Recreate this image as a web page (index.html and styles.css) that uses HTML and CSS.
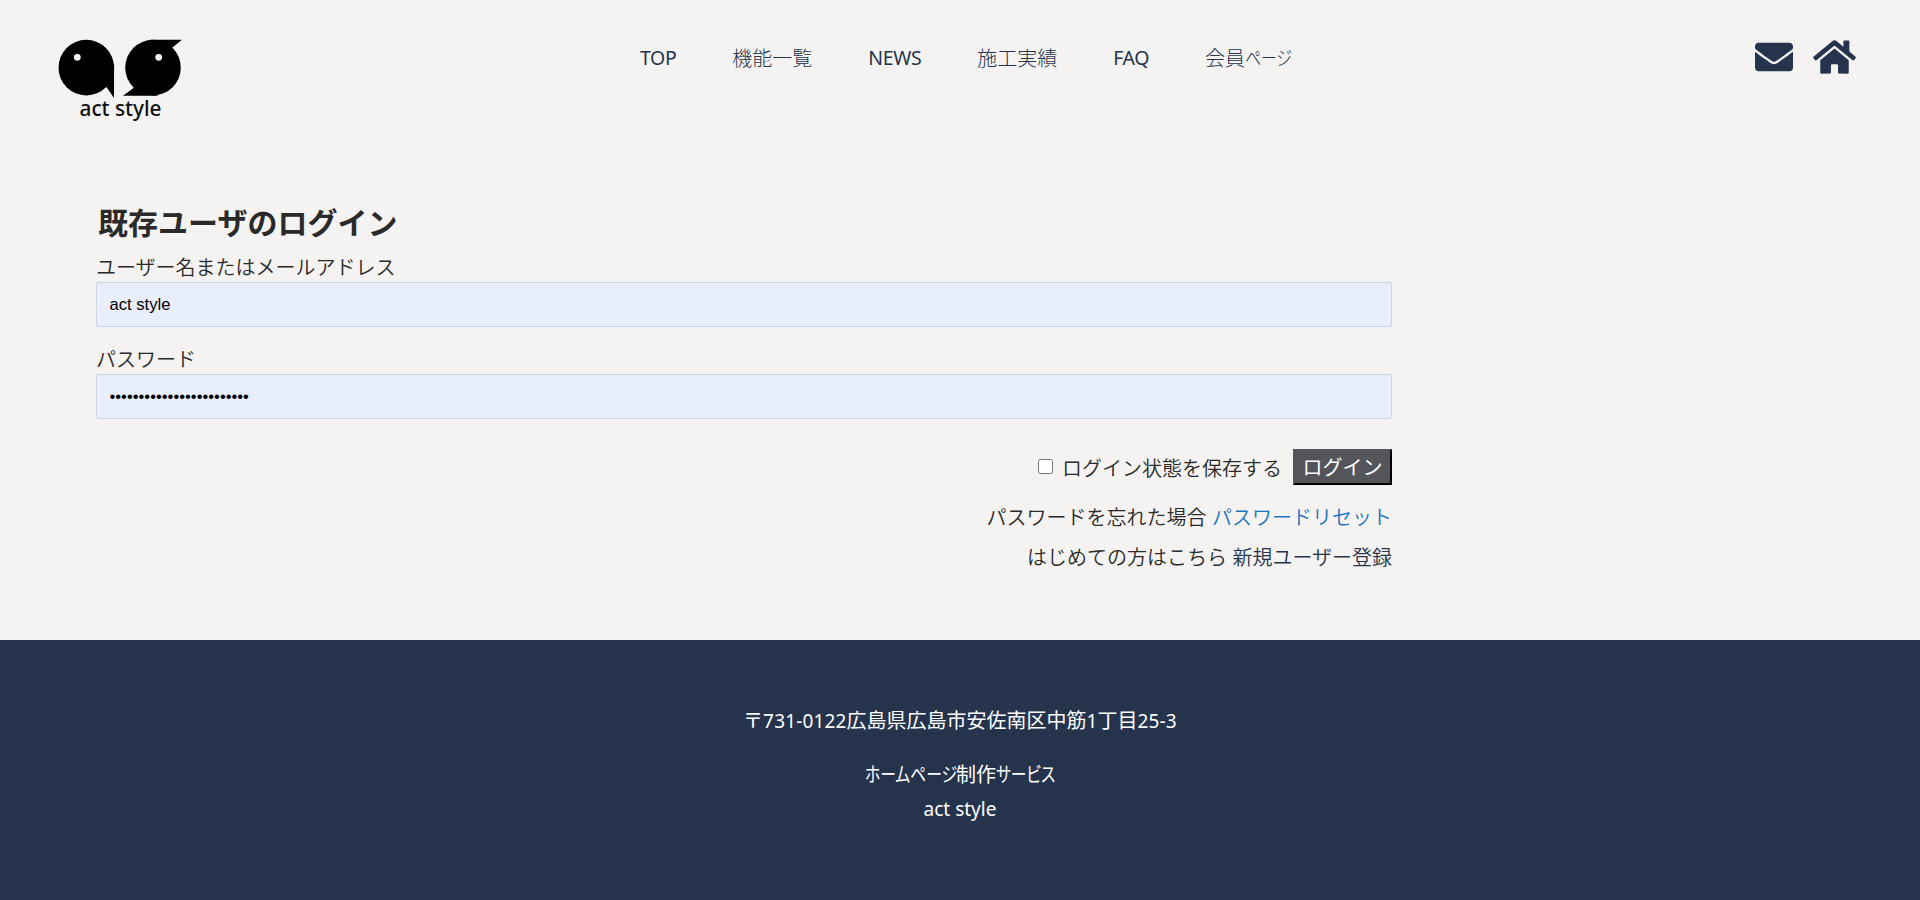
FILE: index.html
```
<!DOCTYPE html>
<html lang="ja">
<head>
    <meta charset="UTF-8">
    <meta name="viewport" content="width=device-width, initial-scale=1.0">
    <title>ログイン | act style</title>
    <link rel="stylesheet" href="styles.css">
</head>
<body>
    <header class="header">
        <a href="#" class="logo">
            <svg width="128" height="100" viewBox="0 0 128 100">
                <circle cx="30.3" cy="37.6" r="27.8"/>
                <path d="M58.1 34 L58 68 L50.8 57.5 L44 50 Z"/>
                <circle cx="97" cy="37.6" r="27.8"/>
                <path d="M94 9.8 H126 L115.8 18 L108 26 Z"/>
                <path d="M102 65.8 H67 L77.5 58 L86 50 Z"/>
                <circle class="logo-eye" cx="21.3" cy="27.3" r="3.4"/>
                <circle class="logo-eye" cx="102.7" cy="27.3" r="3.4"/>
                <text x="23.5" y="86" textLength="82" lengthAdjust="spacingAndGlyphs">act style</text>
            </svg>
        </a>
        <nav class="nav">
            <a href="#" class="en">TOP</a>
            <a href="#">機能一覧</a>
            <a href="#" class="en">NEWS</a>
            <a href="#">施工実績</a>
            <a href="#" class="en">FAQ</a>
            <a href="#">会員<span class="kana kana-page">ページ</span></a>
        </nav>
        <div class="icons">
            <a href="#">
                <svg width="38" height="38" viewBox="0 0 512 512"><path d="M502.3 190.8c3.9-3.1 9.7-.2 9.7 4.7V400c0 26.5-21.5 48-48 48H48c-26.5 0-48-21.5-48-48V195.6c0-5 5.7-7.8 9.7-4.7 22.4 17.4 52.1 39.5 154.1 113.6 21.1 15.4 56.7 47.8 92.2 47.6 35.7.3 72-32.8 92.3-47.6 102-74.1 131.6-96.3 154-113.7zM256 320c23.2.4 56.6-29.2 73.4-41.4 132.7-96.3 142.8-104.7 173.4-128.7 5.8-4.5 9.2-11.5 9.2-18.9v-19c0-26.5-21.5-48-48-48H48c-26.5 0-48 21.5-48 48v19c0 7.4 3.4 14.3 9.2 18.9 30.6 23.9 40.7 32.4 173.4 128.7 16.8 12.2 50.2 41.8 73.4 41.4z"/></svg>
            </a>
            <a href="#">
                <svg width="43" height="38" viewBox="0 0 576 512"><path d="M280.37 148.26L96 300.11V464a16 16 0 0 0 16 16l112.06-.29a16 16 0 0 0 15.92-16V368a16 16 0 0 1 16-16h64a16 16 0 0 1 16 16v95.64a16 16 0 0 0 16 16.05L464 480a16 16 0 0 0 16-16V300L295.67 148.26a12.19 12.19 0 0 0-15.3 0zM571.6 251.47L488 182.56V44.05a12 12 0 0 0-12-12h-56a12 12 0 0 0-12 12v72.61L318.47 43a48 48 0 0 0-61 0L4.34 251.47a12 12 0 0 0-1.6 16.9l25.5 31A12 12 0 0 0 45.15 301l235.22-193.74a12.19 12.19 0 0 1 15.3 0L530.9 301a12 12 0 0 0 16.9-1.6l25.5-31a12 12 0 0 0-1.7-16.93z"/></svg>
            </a>
        </div>
    </header>

    <!-- ログインフォーム -->
    <main class="main">
        <form class="login-form">
            <h2>既存ユーザのログイン</h2>
            <label for="user">ユーザー名またはメールアドレス</label>
            <input type="text" class="field" id="user" value="act style">
            <label for="pass">パスワード</label>
            <input type="password" class="field" id="pass" value="abcdefghijklmnopqrstuvwx">
            <div class="submit-row">
                <input type="checkbox" id="remember">
                <label for="remember">ログイン状態を保存する</label>
                <input type="submit" class="login-button" value="ログイン">
            </div>
            <p class="form-link">パスワードを忘れた場合 <a href="#" class="reset">パスワードリセット</a></p>
            <p class="form-link">はじめての方はこちら <a href="#">新規ユーザー登録</a></p>
        </form>
    </main>

    <footer class="footer">
        <p class="address">〒<span class="num">731-0122</span>広島県広島市安佐南区中筋<span class="num">1</span>丁目<span class="num">25-3</span></p>
        <p class="service"><span class="kana kana-homepage">ホームページ</span>制作<span class="kana kana-service">サービス</span></p>
        <p class="company">act style</p>
    </footer>
</body>
</html>
```
FILE: styles.css
```
* {
    box-sizing: border-box;
}
body {
    margin: 0;
    height: 900px;
    overflow: hidden;
    display: flex;
    flex-direction: column;
    background-color: #f4f3f1;
    color: #2a2a2a;
    font-family: "Noto Sans CJK JP", sans-serif;
    font-size: 20px;
    font-weight: 350;
}
h2, p {
    margin: 0;
}
a {
    color: #25344c;
    text-decoration: none;
}

/* ヘッダー */
.header {
    height: 200px;
    padding: 30px 64px 0 56px;
    display: grid;
    grid-template-columns: 584px 1fr auto;
    align-items: start;
}
.logo svg {
    display: block;
}
.logo text {
    font-family: "Noto Sans", sans-serif;
    font-size: 21px;
    font-weight: 500;
    fill: #111;
}
.logo-eye {
    fill: #f4f3f1;
}
.nav {
    display: flex;
    gap: 56px;
    line-height: 55px;
}
.nav a {
    font-weight: 300;
    white-space: nowrap;
}
.nav .en {
    font-family: "Noto Sans", sans-serif;
    font-size: 19.5px;
    font-weight: 400;
    line-height: 56px;
    letter-spacing: -0.4px;
}

/* 幅の狭いカナ */
.kana {
    display: inline-block;
    white-space: nowrap;
    text-align: left;
    font-feature-settings: "palt";
    transform: scaleX(0.79);
    transform-origin: left;
}
.kana-page {
    width: 46px;
}
.kana-homepage {
    width: 91px;
}
.kana-service {
    width: 59px;
}
.icons {
    display: flex;
    gap: 20px;
    padding-top: 8px;
}
.icons svg {
    display: block;
    fill: #25344c;
}

/* ログインフォーム */
.main {
    height: 440px;
    flex-shrink: 0;
    padding-left: 96px;
}
.login-form {
    width: 1296px;
}
.login-form h2 {
    padding-left: 2px;
    font-size: 30px;
    line-height: 42px;
    margin-bottom: 9px;
}
.login-form label {
    display: block;
    line-height: 31px;
}
.field {
    display: block;
    width: 100%;
    height: 45px;
    margin-bottom: 16px;
    padding: 1px 13px 0 12.5px;
    background-color: #e8eefc;
    border: 1px solid #ccd5e3;
    border-radius: 2px;
    color: #000;
    font-family: "Liberation Sans", sans-serif;
    font-size: 16.6px;
}
.submit-row {
    display: flex;
    justify-content: flex-end;
    align-items: center;
    margin: 30px 0 12px;
}
.submit-row input[type="checkbox"] {
    width: 15px;
    height: 15px;
    margin: 0 9px 2px 0;
}
.login-button {
    width: 99px;
    height: 36px;
    margin-left: 11px;
    padding: 0;
    background-color: #54555b;
    border: 2px outset #54555b;
    border-color: #54555b #000 #000 #54555b;
    color: #fff;
    font-family: "Noto Sans CJK JP", sans-serif;
    font-size: 20px;
    font-weight: 400;
    line-height: 30px;
}
.form-link {
    line-height: 40px;
    text-align: right;
    word-spacing: 1px;
}
.form-link .reset {
    color: #1e73be;
}

/* フッター */
.footer {
    flex: 1;
    padding-top: 62px;
    background-color: #25344c;
    color: #fff;
    font-weight: 400;
    text-align: center;
    line-height: 35px;
}
.footer .num,
.company {
    font-family: "Noto Sans", sans-serif;
    font-size: 19px;
}
.footer .num {
    letter-spacing: 0.15px;
}
.address {
    margin-bottom: 17px;
}
.company {
    line-height: 37px;
}
```
